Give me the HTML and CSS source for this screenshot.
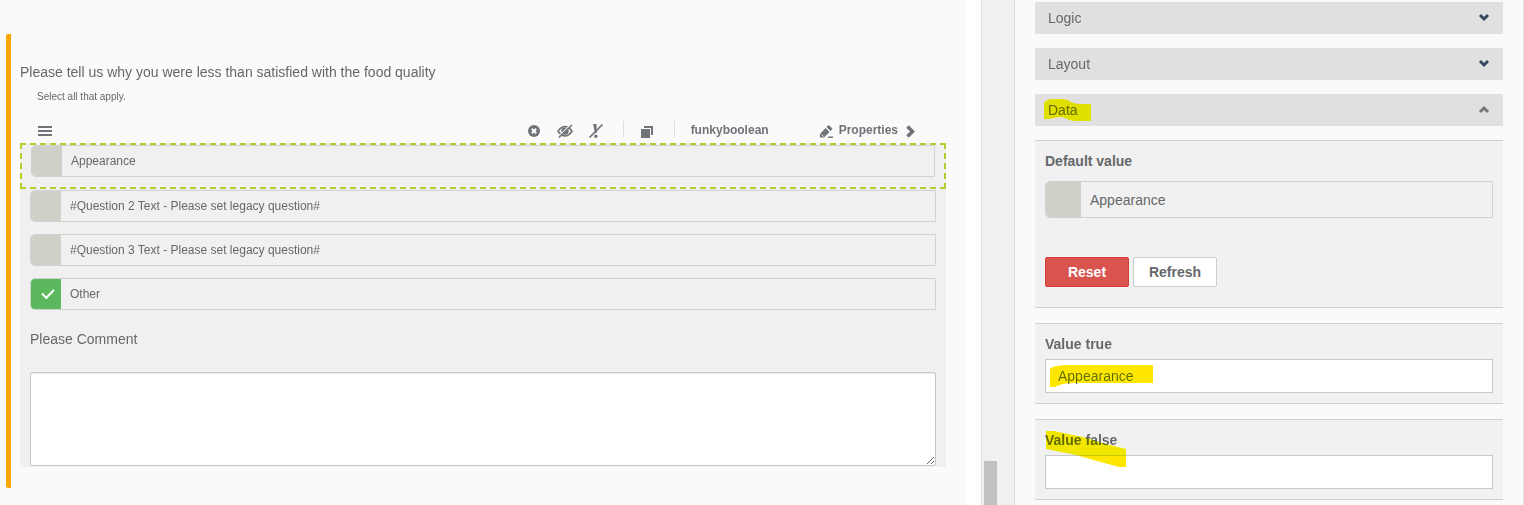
FILE: index.html
```
<!DOCTYPE html>
<html lang="en">
<head>
	<meta charset="utf-8">
	<title>Survey editor</title>
	<link rel="stylesheet" href="styles.css">
</head>
<body>
	<main class="canvas">
		<div class="question">
			<h1 class="question-title">Please tell us why you were less than satisfied with the food quality</h1>
			<p class="hint">Select all that apply.</p>

			<div class="toolbar">
				<button class="tool menu" aria-label="Move">
					<svg width="16" height="16" viewBox="0 0 16 16"><path d="M1 4h14M1 8h14M1 12h14" stroke="currentColor" stroke-width="2"/></svg>
				</button>
				<div class="tool-group">
					<button class="tool" aria-label="Remove">
						<svg width="16" height="16" viewBox="0 0 16 16"><circle cx="8" cy="8" r="6" fill="currentColor"/><path d="M5.800 5.800l4.400 4.400M10.200 5.800l-4.400 4.400" stroke="#fafafa" stroke-width="2"/></svg>
					</button>
					<button class="tool" aria-label="Hide">
						<svg width="16" height="16" viewBox="0 0 16 16"><path d="M1 8.200Q4.200 3.500 8 3.500t7 4.700Q11.800 12.800 8 12.800T1 8.200z" fill="none" stroke="currentColor" stroke-width="1.700"/><circle cx="8" cy="8" r="3.700" fill="currentColor"/><path d="M2.200 12.800L13.800 1.800" stroke="#fafafa" stroke-width="1.300"/><path d="M2 14.300L15 2" stroke="currentColor" stroke-width="1.600"/></svg>
					</button>
					<button class="tool" aria-label="Not required">
						<svg width="16" height="16" viewBox="0 0 16 16"><path d="M5 1h3.500L8.700 10H7z" fill="currentColor"/><circle cx="7.800" cy="13.300" r="1.700" fill="currentColor"/><path d="M1.500 14.500L14.500 1.500" stroke="currentColor" stroke-width="1.700"/></svg>
					</button>
				</div>
				<span class="sep"></span>
				<button class="tool" aria-label="Copy">
					<svg width="16" height="16" viewBox="0 0 16 16"><path d="M1 6h9v9H1zM4 3h9v9h-2V5H4z" fill="currentColor"/></svg>
				</button>
				<span class="sep"></span>
				<span class="name">funkyboolean</span>
				<button class="tool properties">
					<svg width="16" height="16" viewBox="0 0 16 16"><path d="M1 14.500V11L6.600 5l3.900 3.900L5 14.500zM7.500 4.100L9.800 2l3.800 3.700-2.200 2.300zM9 13.500h5V15H9z" fill="currentColor"/><path d="M2.500 11.500l2 2" stroke="#fafafa" stroke-width="1"/></svg>
					Properties
					<svg width="16" height="16" viewBox="0 0 16 16"><path d="M5.500 3.500L10.500 8.500 5.500 13.500" fill="none" stroke="currentColor" stroke-width="3.500"/></svg>
				</button>
			</div>

			<div class="answers">
				<div class="selected">
					<label class="option"><input type="checkbox">Appearance</label>
				</div>
				<div class="list">
					<label class="option"><input type="checkbox">#Question 2 Text - Please set legacy question#</label>
					<label class="option"><input type="checkbox">#Question 3 Text - Please set legacy question#</label>
					<label class="option"><input type="checkbox" checked>Other</label>
					<label class="comment-label" for="comment">Please Comment</label>
					<textarea class="comment" id="comment"></textarea>
				</div>
			</div>
		</div>
	</main>

	<div class="gutter">
		<div class="thumb"></div>
	</div>

	<aside class="panel">
		<button class="head">Logic
			<svg width="12" height="12" viewBox="0 0 12 12"><path d="M2 3l4 4 4-4" fill="none" stroke="currentColor" stroke-width="3"/></svg>
		</button>
		<button class="head">Layout
			<svg width="12" height="12" viewBox="0 0 12 12"><path d="M2 3l4 4 4-4" fill="none" stroke="currentColor" stroke-width="3"/></svg>
		</button>
		<button class="head open">Data
			<svg width="12" height="12" viewBox="0 0 12 12"><path d="M2 8l4-4 4 4" fill="none" stroke="currentColor" stroke-width="3"/></svg>
			<svg class="marker mark-data" width="48" height="24" viewBox="0 0 48 24"><path d="M0 4Q1 1 7 0H17Q24 0 27 3Q31 5 37 5H47V22H30Q24 21 21 19Q17 17 10 19L5 20H0z"/></svg>
		</button>

		<section class="box">
			<h2 class="box-title">Default value</h2>
			<label class="option large"><input type="checkbox">Appearance</label>
			<div class="buttons">
				<button class="btn danger">Reset</button>
				<button class="btn">Refresh</button>
			</div>
		</section>

		<section class="box">
			<label class="box-title" for="true">Value true</label>
			<input class="field" id="true" type="text" value="Appearance">
			<svg class="marker mark-true" width="104" height="22" viewBox="0 0 104 22"><path d="M0 4Q1 1 15 0H103V18H24Q12 18 5 22H0z"/></svg>
		</section>

		<section class="box">
			<label class="box-title" for="false">Value false</label>
			<input class="field" id="false" type="text">
			<svg class="marker mark-false" width="80" height="36" viewBox="0 0 80 36"><path d="M0 0H8L37 6L60 13L80 18V36H73L51 30L30 24L0 18z"/></svg>
		</section>
	</aside>
</body>
</html>
```
FILE: styles.css
```
*{
	box-sizing: border-box;
}
body{
	margin: 0;
	display: flex;
	min-height: 100vh;
	background: #fff;
	color: #65686b;
	font-family: Arial, "Liberation Sans", sans-serif;
	font-size: 14px;
	line-height: 20px;
}
button, input, textarea{
	font: inherit;
	color: inherit;
	margin: 0;
}

/* survey canvas */
.canvas{
	flex: 1;
	min-width: 0;
	padding: 34px 20px 0 6px;
	background: #fafafa;
}
.question{
	border-left: 5px solid #ffa500;
	border-radius: 2px;
	padding: 28px 0 21px 9px;
}
.question-title{
	margin: 0;
	font-size: 14px;
	font-weight: normal;
}
.hint{
	margin: 8px 0 15px 17px;
	font-size: 10px;
	line-height: 14px;
}
.toolbar{
	display: flex;
	align-items: center;
	height: 21px;
	margin-bottom: 3px;
	padding: 0 28px 0 17px;
	color: #707478;
	font-size: 12px;
	font-weight: bold;
}
.tool{
	display: flex;
	padding: 0;
	border: 0;
	background: none;
}
.menu{
	margin-right: auto;
}
.tool-group{
	display: flex;
	gap: 15px;
	margin-right: 1px;
}
.toolbar svg{
	margin-top: 2px;
}
.sep{
	width: 1px;
	height: 16px;
	margin: 0 16px 2px 18px;
	background: #ddd;
}
.properties{
	align-items: center;
	gap: 4px;
	margin-left: 50px;
}
.answers{
	background: #f0f0f0;
}
.selected{
	padding: 0 9px 10px;
	border: 2px dashed #b2cf2f;
}
.list{
	display: flex;
	flex-direction: column;
	gap: 12px;
	padding: 1px 10px;
}
.option{
	display: flex;
	align-items: center;
	gap: 9px;
	height: 32px;
	border: 1px solid #d0d1d2;
	border-radius: 5px 0 0 5px;
	overflow: hidden;
	font-size: 12px;
}
.option input{
	appearance: none;
	width: 30px;
	height: 100%;
	background: #d0d0c8;
}
.option input:checked{
	background: #5cb85c;
	display: flex;
	align-items: center;
	justify-content: center;
}
.option input:checked::before{
	content: "";
	width: 10px;
	height: 5px;
	margin: 0 0 3px 4px;
	border: solid #fff;
	border-width: 0 0 2px 2px;
	transform: rotate(-45deg);
}
.comment-label{
	padding: 7px 0 11px;
}
.comment{
	display: block;
	width: 100%;
	height: 94px;
	border: 1px solid #c8c8c8;
	border-radius: 2px;
	background: #fff;
	box-shadow: inset 0 1px 1px #e8e8e8;
}

/* space between canvas and panel, with the scroll thumb */
.gutter{
	display: flex;
	width: 34px;
	margin-left: 15px;
	padding-left: 2px;
	border-left: 1px solid #ddd;
	border-right: 1px solid #ddd;
	background: #f0f0f0;
}
.thumb{
	align-self: flex-end;
	width: 13px;
	height: 44px;
	background: #c1c1c1;
}

/* settings */
.panel{
	width: 509px;
	padding: 2px 20px 5px;
	border-right: 1px solid #ddd;
	background: #fafafa;
}
.head{
	position: relative;
	display: flex;
	justify-content: space-between;
	align-items: center;
	width: 100%;
	height: 32px;
	margin-bottom: 14px;
	padding: 0 13px;
	border: 0;
	background: #e0e0e0;
}
.head svg{
	color: #34495e;
}
.head.open svg{
	color: #777;
}
.box{
	position: relative;
	margin-bottom: 15px;
	padding: 10px;
	border: solid #d0d0d0;
	border-width: 1px 0;
	background: #f1f1f1;
}
.box:last-child{
	margin-bottom: 0;
}
.box-title{
	display: block;
	margin: 0 0 5px;
	font-size: 14px;
	font-weight: bold;
}
.large{
	height: 37px;
	margin-top: 10px;
	font-size: 14px;
}
.large input{
	width: 35px;
}
.buttons{
	display: flex;
	gap: 4px;
	margin: 39px 0 10px;
}
.btn{
	width: 84px;
	height: 30px;
	padding: 0;
	border: 1px solid #ccc;
	border-radius: 2px;
	background: #fff;
	font-weight: bold;
}
.danger{
	border-color: #d43f3a;
	background: #d9534f;
	color: #fff;
}
.field{
	display: block;
	width: 100%;
	height: 34px;
	padding: 0 12px;
	border: 1px solid #c8c8c8;
	background: #fff;
}

/* highlighter strokes */
.marker{
	position: absolute;
	fill: #ffe600;
	mix-blend-mode: darken;
	pointer-events: none;
}
.mark-data{
	left: 9px;
	top: 5px;
}
.mark-true{
	left: 15px;
	top: 41px;
}
.mark-false{
	left: 11px;
	top: 11px;
}
```
